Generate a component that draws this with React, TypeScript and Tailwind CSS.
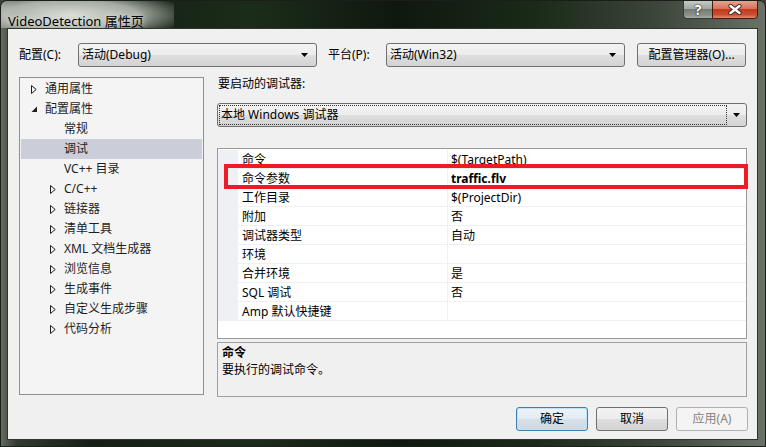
import React from "react";

const FONT = "font-['Noto_Sans','Noto_Sans_CJK_SC',sans-serif]";

const Tri = ({ open }: { open?: boolean }) =>
  open ? (
    <svg width="7" height="8" viewBox="0 0 7 8" className="block">
      <path d="M6 1.5 L6 7 L0.5 7 Z" fill="#1e1e1e" />
    </svg>
  ) : (
    <svg width="6" height="9" viewBox="0 0 6 9" className="block">
      <path d="M0.5 0.5 L5.2 4.5 L0.5 8.5 Z" fill="none" stroke="#1e1e1e" strokeWidth="1" />
    </svg>
  );

const Arrow = () => (
  <svg width="7" height="4" viewBox="0 0 7 4" className="block">
    <path d="M0 0 L7 0 L3.5 4 Z" fill="#000" />
  </svg>
);

type TreeItem = { label: string; level: 0 | 1; tri?: "open" | "closed"; selected?: boolean };

const tree: TreeItem[] = [
  { label: "通用属性", level: 0, tri: "closed" },
  { label: "配置属性", level: 0, tri: "open" },
  { label: "常规", level: 1 },
  { label: "调试", level: 1, selected: true },
  { label: "VC++ 目录", level: 1 },
  { label: "C/C++", level: 1, tri: "closed" },
  { label: "链接器", level: 1, tri: "closed" },
  { label: "清单工具", level: 1, tri: "closed" },
  { label: "XML 文档生成器", level: 1, tri: "closed" },
  { label: "浏览信息", level: 1, tri: "closed" },
  { label: "生成事件", level: 1, tri: "closed" },
  { label: "自定义生成步骤", level: 1, tri: "closed" },
  { label: "代码分析", level: 1, tri: "closed" },
];

const props: { name: string; value: string; bold?: boolean }[] = [
  { name: "命令", value: "$(TargetPath)" },
  { name: "命令参数", value: "traffic.flv", bold: true },
  { name: "工作目录", value: "$(ProjectDir)" },
  { name: "附加", value: "否" },
  { name: "调试器类型", value: "自动" },
  { name: "环境", value: "" },
  { name: "合并环境", value: "是" },
  { name: "SQL 调试", value: "否" },
  { name: "Amp 默认快捷键", value: "" },
];

function Combo({ text, width }: { text: string; width: string }) {
  return (
    <div
      className={`${width} h-[24px] flex items-center justify-between border border-[#707070] rounded-[3px] bg-[linear-gradient(to_bottom,#f3f3f3_0%,#ececec_50%,#dedede_50%,#d3d3d3_100%)] pl-[3px] pr-[8px]`}
    >
      <span className="text-[12px] leading-[14px] text-black">{text}</span>
      <Arrow />
    </div>
  );
}

export default function App() {
  return (
    <div className={`w-[766px] h-[447px] bg-[#3a3f3a] ${FONT}`}>
      <div className="w-[766px] h-[447px] flex flex-col overflow-hidden rounded-t-[7px] border border-[#1a1f1a] bg-[linear-gradient(90deg,#646c61_0%,#323b30_2%,#151e14_12%,#1c2c1a_33%,#0f180f_52%,#1b2a19_70%,#3c463a_86%,#6a7267_100%)]">
        {/* Title bar */}
        <div className="h-[27px] flex items-start justify-between pr-[7px] shrink-0">
          <div className="h-[27px] pl-[7px] pr-[30px] pt-[7px] bg-[radial-gradient(ellipse_120px_26px_at_70px_14px,rgba(224,228,220,0.97)_0%,rgba(214,219,210,0.75)_55%,rgba(200,205,196,0)_100%)]">
            <span className="text-[13px] leading-[16px] text-black [text-shadow:0_0_6px_#ffffff]">
              VideoDetection 属性页
            </span>
          </div>
          <div className="flex -mt-[1px]">
            <div className="w-[29px] h-[19px] flex items-center justify-center border border-[#353a35] border-r-0 rounded-bl-[4px] bg-[linear-gradient(to_bottom,#c4cac4_0%,#a2a9a2_45%,#747c74_50%,#8c948c_85%,#a9b0a9_100%)]">
              <span className="text-[14px] leading-[14px] font-bold text-white [text-shadow:0_0_2px_#202020,0_0_1px_#202020]">?</span>
            </div>
            <div className="w-[46px] h-[19px] flex items-center justify-center border border-[#4a1a12] rounded-br-[4px] bg-[linear-gradient(to_bottom,#e6a292_0%,#d6735c_45%,#c33a1e_50%,#cc4e32_80%,#e08a70_100%)]">
              <svg width="14" height="11" viewBox="0 0 14 11" className="block">
                <path d="M2.5 2 L11.5 9 M11.5 2 L2.5 9" stroke="#3a2a26" strokeWidth="4.2" strokeLinecap="round" />
                <path d="M2.5 2 L11.5 9 M11.5 2 L2.5 9" stroke="#ffffff" strokeWidth="2.4" strokeLinecap="round" />
              </svg>
            </div>
          </div>
        </div>

        {/* Client area */}
        <div className="ml-[6px] w-[751px] h-[412px] border border-[#2e352d] bg-[#f0f0f0] flex flex-col pt-[14px] pl-[11px] text-[12px] leading-[14px] text-black">
          {/* Config row */}
          <div className="flex items-center h-[24px]">
            <span className="w-[59px]">配置(C):</span>
            <Combo text="活动(Debug)" width="w-[239px]" />
            <span className="ml-[11px] w-[58px]">平台(P):</span>
            <Combo text="活动(Win32)" width="w-[239px]" />
            <div className="ml-[12px] w-[109px] h-[24px] flex items-center justify-center border border-[#707070] rounded-[3px] bg-[linear-gradient(to_bottom,#f3f3f3_0%,#ececec_50%,#dedede_50%,#d3d3d3_100%)]">
              配置管理器(O)...
            </div>
          </div>

          {/* Main area */}
          <div className="flex mt-[10px] gap-[13px]">
            {/* Tree */}
            <div className="w-[185px] h-[318px] border border-[#8e8f8f] bg-[#f4f4f4] pt-[1px] flex flex-col">
              {tree.map((t) => (
                <div
                  key={t.label}
                  className={`mx-[1px] h-[20px] flex items-center ${t.level === 0 ? "pl-[10px]" : "pl-[29px]"} ${
                    t.selected ? "bg-[#cbcdd9]" : ""
                  }`}
                >
                  <span className="w-[14px] flex items-center">
                    {t.tri ? <Tri open={t.tri === "open"} /> : null}
                  </span>
                  <span className="text-[#1e1e1e]">{t.label}</span>
                </div>
              ))}
            </div>

            {/* Right column */}
            <div className="w-[530px] flex flex-col">
              <div className="pl-[1px]">要启动的调试器:</div>
              <div className="mt-[12px] h-[24px] border border-[#707070] rounded-[3px] bg-[linear-gradient(to_bottom,#f3f3f3_0%,#ececec_50%,#dedede_50%,#d3d3d3_100%)] flex items-center p-[1px]">
                <div className="flex-1 h-[20px] border border-dotted border-[#333] flex items-center pl-[1px]">
                  本地 Windows 调试器
                </div>
                <div className="w-[18px] flex justify-center">
                  <Arrow />
                </div>
              </div>

              {/* Property grid */}
              <div className="relative mt-[21px] h-[191px] border border-[#9a9a9a] bg-white pt-[1px]">
                {props.map((p) => (
                  <div key={p.name} className="flex h-[19px]">
                    <div className="w-[20px] bg-[#eef0f4]" />
                    <div className="w-[210px] border-r border-b border-[#f0f0f0] pl-[4px] pt-[1px] flex items-center">
                      {p.name}
                    </div>
                    <div className={`flex-1 border-b border-[#f0f0f0] pl-[3px] pt-[1px] flex items-center ${p.bold ? "font-bold" : ""}`}>
                      {p.value}
                    </div>
                  </div>
                ))}
                <div className="absolute left-[6px] top-[15px] w-[524px] h-[25px] border-4 border-[#ed1c24]" />
              </div>

              {/* Description */}
              <div className="mt-[3px] h-[55px] border border-[#a0a0a0] bg-[#f0f0f0] px-[4px] pt-[1px]">
                <div className="font-bold h-[17px] flex items-center">命令</div>
                <div className="h-[17px] flex items-center">要执行的调试命令。</div>
              </div>
            </div>
          </div>

          {/* Buttons */}
          <div className="mt-[10px] flex justify-end gap-[8px] pr-[9px]">
            <div className="w-[72px] h-[24px] flex items-center justify-center border border-[#3c7fb1] rounded-[3px] bg-[linear-gradient(to_bottom,#edf3f8_0%,#e3ebf2_50%,#d5e0ea_50%,#cdd9e4_100%)] shadow-[inset_0_0_0_1px_#bfe3f8]">
              确定
            </div>
            <div className="w-[72px] h-[24px] flex items-center justify-center border border-[#707070] rounded-[3px] bg-[linear-gradient(to_bottom,#f3f3f3_0%,#ececec_50%,#dedede_50%,#d3d3d3_100%)]">
              取消
            </div>
            <div className="w-[72px] h-[24px] flex items-center justify-center border border-[#adb2b5] rounded-[3px] bg-[#f4f4f4] text-[#838383]">
              应用(A)
            </div>
          </div>
        </div>
      </div>
    </div>
  );
}
